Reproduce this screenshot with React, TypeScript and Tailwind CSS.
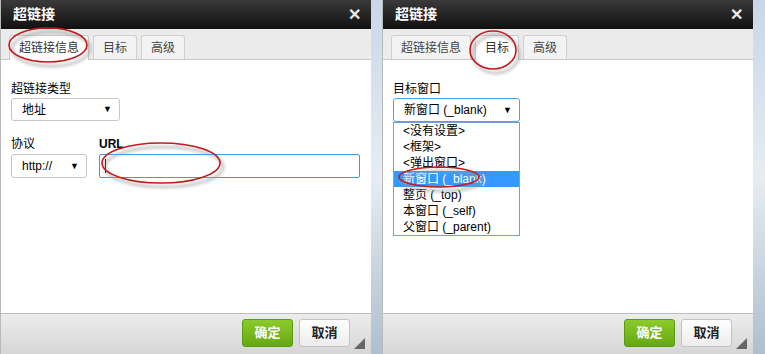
import React from 'react';

const font = { fontFamily: '"Liberation Sans", "Noto Sans CJK SC", sans-serif' };

function Ellipse({ cx, cy, rx, ry }: { cx: number; cy: number; rx: number; ry: number }) {
  return (
    <g>
      <ellipse cx={cx + 3} cy={cy + 4} rx={rx} ry={ry} fill="none" stroke="#9a9a9a" strokeWidth="3" opacity="0.55" filter="url(#blur)" />
      <ellipse cx={cx} cy={cy} rx={rx} ry={ry} fill="none" stroke="#c8191e" strokeWidth="1.6" />
    </g>
  );
}

function Marks({ items }: { items: { cx: number; cy: number; rx: number; ry: number }[] }) {
  return (
    <svg className="absolute left-0 top-0 pointer-events-none" width="371" height="354">
      <defs>
        <filter id="blur" x="-20%" y="-50%" width="140%" height="200%">
          <feGaussianBlur stdDeviation="1.5" />
        </filter>
      </defs>
      {items.map((e, i) => (
        <Ellipse key={i} {...e} />
      ))}
    </svg>
  );
}

function Arrow() {
  return <span className="text-[9px] leading-none text-black">▼</span>;
}

function Dialog({ active, children, marks }: { active: number; children: React.ReactNode; marks: { cx: number; cy: number; rx: number; ry: number }[] }) {
  const tabs = ['超链接信息', '目标', '高级'];
  return (
    <div className="relative flex h-full w-[371px] shrink-0 flex-col border-l border-[#b9b9b9] bg-white">
      {/* title bar */}
      <div className="flex h-[29px] items-center justify-between bg-gradient-to-b from-[#3a3a3a] to-[#111] pl-[12px] pr-[10px]">
        <span className="text-[14px] font-bold text-white">超链接</span>
        <span className="text-[16px] font-bold leading-none text-[#e8e8e8]">✕</span>
      </div>
      {/* tabs */}
      <div className="flex h-[31px] items-end gap-[4px] border-b border-[#c9c9c9] bg-[#ebebeb] pl-[8px]">
        {tabs.map((t, i) => (
          <div
            key={t}
            className={
              i === active
                ? '-mb-px flex h-[25px] items-center rounded-t-[3px] border border-b-0 border-[#c9c9c9] bg-white px-[9px] text-[12px] text-[#333]'
                : 'flex h-[24px] items-center rounded-t-[3px] border border-b-0 border-[#cfcfcf] bg-[#f3f3f3] px-[9px] text-[12px] text-[#444]'
            }
          >
            {t}
          </div>
        ))}
      </div>
      {/* body */}
      <div className="flex-1 px-[10px] pt-[22px]">{children}</div>
      {/* footer */}
      <div className="flex h-[41px] items-center justify-end gap-[6px] border-t border-[#bdbdbd] bg-gradient-to-b from-[#ececec] to-[#d6d6d6] pr-[21px] pb-[2px]">
        <button className="flex h-[28px] w-[51px] items-center justify-center rounded-[3px] border border-[#5b9b10] bg-gradient-to-b from-[#8ccb2c] to-[#65a811] text-[13px] font-bold text-white">
          确定
        </button>
        <button className="flex h-[28px] w-[51px] items-center justify-center rounded-[3px] border border-[#c2c2c2] bg-gradient-to-b from-white to-[#ececec] text-[13px] font-bold text-[#222]">
          取消
        </button>
      </div>
      <div className="absolute bottom-[5px] right-[6px] h-0 w-0 border-b-[11px] border-l-[11px] border-b-[#666] border-l-transparent" />
      <Marks items={marks} />
    </div>
  );
}

export default function App() {
  const options = ['<没有设置>', '<框架>', '<弹出窗口>', '新窗口 (_blank)', '整页 (_top)', '本窗口 (_self)', '父窗口 (_parent)'];
  return (
    <div className="flex h-[354px] w-[765px] overflow-hidden bg-gradient-to-b from-[#c8d7e8] via-[#e6edf3] to-[#aebfce]" style={font}>
      <Dialog
        active={0}
        marks={[
          { cx: 47, cy: 45, rx: 39, ry: 17 },
          { cx: 160, cy: 163, rx: 59, ry: 20 },
        ]}
      >
        <div className="text-[12px] leading-[14px] text-black">超链接类型</div>
        <div className="mt-[2px] flex h-[23px] w-[109px] items-center justify-between rounded-[3px] border border-[#c6c6c6] pl-[10px] pr-[7px] text-[12px]">
          <span>地址</span>
          <Arrow />
        </div>
        <div className="mt-[16px] flex gap-[12px]">
          <div>
            <div className="text-[12px] leading-[14px]">协议</div>
            <div className="mt-[3px] flex h-[24px] w-[76px] items-center justify-between rounded-[3px] border border-[#c6c6c6] pl-[10px] pr-[7px] text-[12px]">
              <span>http://</span>
              <Arrow />
            </div>
          </div>
          <div className="flex-1">
            <div className="text-[12px] font-bold leading-[14px]">URL</div>
            <div className="mt-[3px] flex h-[24px] w-[261px] items-center rounded-[2px] border border-[#3d9ae8] pl-[5px]">
              <div className="h-[14px] w-px bg-black" />
            </div>
          </div>
        </div>
      </Dialog>
      <div className="w-[11px] shrink-0" />
      <Dialog
        active={1}
        marks={[
          { cx: 110, cy: 50, rx: 23, ry: 19 },
          { cx: 56, cy: 177, rx: 40, ry: 10 },
        ]}
      >
        <div className="text-[12px] leading-[14px] text-black">目标窗口</div>
        <div className="mt-[2px] flex h-[24px] w-[127px] items-center justify-between rounded-[3px] border border-[#4aa2ec] pl-[10px] pr-[7px] text-[12px]">
          <span>新窗口 (_blank)</span>
          <Arrow />
        </div>
        <div className="w-[127px] border border-[#7f9dd1] bg-white py-0">
          {options.map((o, i) => (
            <div
              key={o}
              className={
                i === 3
                  ? 'flex h-[16px] items-center bg-[#3399ff] pl-[9px] text-[12px] text-white'
                  : 'flex h-[16px] items-center pl-[9px] text-[12px] text-black'
              }
            >
              {o}
            </div>
          ))}
        </div>
      </Dialog>
    </div>
  );
}
